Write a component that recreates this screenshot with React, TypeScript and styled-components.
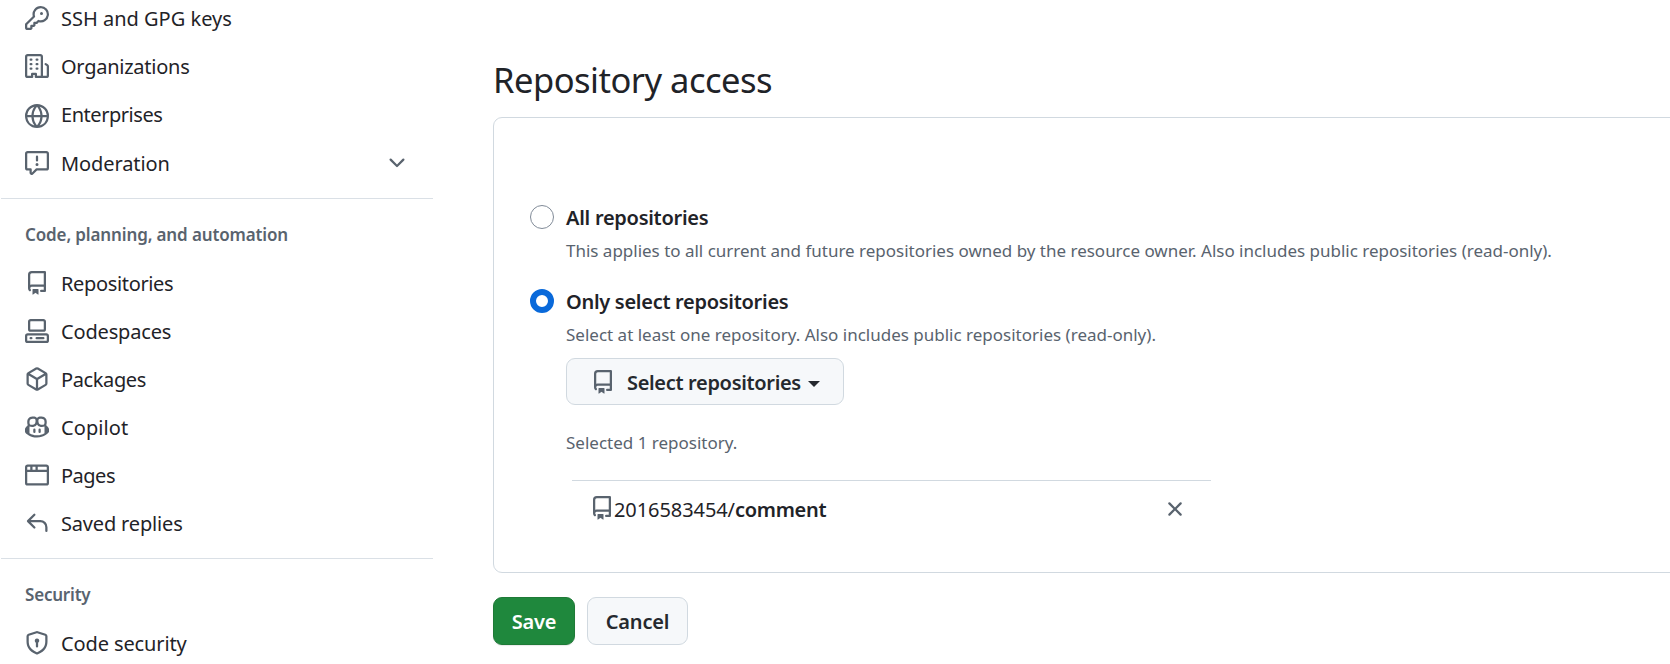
import React from "react";
import styled, { createGlobalStyle } from "styled-components";

const GlobalStyle = createGlobalStyle`
  * { box-sizing: border-box; }
  body {
    margin: 0;
    background: #fff;
    color: #1f2328;
    font-family: "Noto Sans", "Open Sans", sans-serif;
    font-size: 20px;
    line-height: 30px;
    overflow: hidden;
  }
  button { font: inherit; color: inherit; }
`;

const paths = {
  key: "M10.5 0a5.499 5.499 0 1 1-1.288 10.848l-.932.932a.749.749 0 0 1-.53.22H7v.75a.749.749 0 0 1-.22.53l-.5.5a.749.749 0 0 1-.53.22H5v.75a.749.749 0 0 1-.22.53l-.5.5a.749.749 0 0 1-.53.22h-2A1.75 1.75 0 0 1 0 14.25v-2c0-.199.079-.389.22-.53l4.932-4.932A5.5 5.5 0 0 1 10.5 0Zm-4 5.5c-.001.431.069.86.205 1.269a.75.75 0 0 1-.181.768L1.5 12.56v1.69c0 .138.112.25.25.25h1.69l.06-.06v-1.19a.75.75 0 0 1 .75-.75h1.19l.06-.06v-1.19a.75.75 0 0 1 .75-.75h1.19l1.023-1.025a.75.75 0 0 1 .768-.18A4 4 0 1 0 6.5 5.5ZM11 6a1 1 0 1 1 0-2 1 1 0 0 1 0 2Z",
  organization: "M1.75 16A1.75 1.75 0 0 1 0 14.25V1.75C0 .784.784 0 1.75 0h8.5C11.216 0 12 .784 12 1.75v12.5c0 .085-.006.168-.018.25h2.268a.25.25 0 0 0 .25-.25V8.285a.25.25 0 0 0-.111-.208l-1.055-.703a.749.749 0 1 1 .832-1.248l1.055.703c.487.325.779.871.779 1.456v5.965A1.75 1.75 0 0 1 14.25 16h-3.5a.766.766 0 0 1-.197-.026c-.099.017-.2.026-.303.026h-3a.75.75 0 0 1-.75-.75V14h-1v1.25a.75.75 0 0 1-.75.75Zm-.25-1.75c0 .138.112.25.25.25H4v-1.25a.75.75 0 0 1 .75-.75h2.5a.75.75 0 0 1 .75.75v1.25h2.25a.25.25 0 0 0 .25-.25V1.75a.25.25 0 0 0-.25-.25h-8.5a.25.25 0 0 0-.25.25ZM3.75 6h.5a.75.75 0 0 1 0 1.5h-.5a.75.75 0 0 1 0-1.5ZM3 3.75A.75.75 0 0 1 3.75 3h.5a.75.75 0 0 1 0 1.5h-.5A.75.75 0 0 1 3 3.75Zm4 3A.75.75 0 0 1 7.75 6h.5a.75.75 0 0 1 0 1.5h-.5A.75.75 0 0 1 7 6.75ZM7.75 3h.5a.75.75 0 0 1 0 1.5h-.5a.75.75 0 0 1 0-1.5ZM3 9.75A.75.75 0 0 1 3.75 9h.5a.75.75 0 0 1 0 1.5h-.5A.75.75 0 0 1 3 9.75ZM7.75 9h.5a.75.75 0 0 1 0 1.5h-.5a.75.75 0 0 1 0-1.5Z",
  globe: "M8 0a8 8 0 1 1 0 16A8 8 0 0 1 8 0ZM5.78 8.75a9.64 9.64 0 0 0 1.363 4.177c.255.426.542.832.857 1.215.245-.296.551-.705.857-1.215A9.64 9.64 0 0 0 10.22 8.75Zm4.44-1.5a9.64 9.64 0 0 0-1.363-4.177c-.307-.51-.612-.919-.857-1.215a9.927 9.927 0 0 0-.857 1.215A9.64 9.64 0 0 0 5.78 7.25Zm-5.944 1.5H1.543a6.507 6.507 0 0 0 4.666 5.5c-.123-.181-.24-.365-.352-.552-.715-1.192-1.437-2.874-1.581-4.948Zm-2.733-1.5h2.733c.144-2.074.866-3.756 1.58-4.948.12-.197.237-.381.353-.552a6.507 6.507 0 0 0-4.666 5.5Zm10.181 1.5c-.144 2.074-.866 3.756-1.58 4.948-.12.197-.237.381-.353.552a6.507 6.507 0 0 0 4.666-5.5Zm2.733-1.5a6.507 6.507 0 0 0-4.666-5.5c.123.181.24.365.353.552.714 1.192 1.436 2.874 1.58 4.948Z",
  report: "M0 1.75C0 .784.784 0 1.75 0h12.5C15.216 0 16 .784 16 1.75v9.5A1.75 1.75 0 0 1 14.25 13H8.06l-2.573 2.573A1.458 1.458 0 0 1 3 14.543V13H1.75A1.75 1.75 0 0 1 0 11.25Zm1.75-.25a.25.25 0 0 0-.25.25v9.5c0 .138.112.25.25.25h2a.75.75 0 0 1 .75.75v2.19l2.72-2.72a.749.749 0 0 1 .53-.22h6.5a.25.25 0 0 0 .25-.25v-9.5a.25.25 0 0 0-.25-.25Zm7 2.25v2.5a.75.75 0 0 1-1.5 0v-2.5a.75.75 0 0 1 1.5 0ZM9 9a1 1 0 1 1-2 0 1 1 0 0 1 2 0Z",
  chevron: "M12.78 5.22a.749.749 0 0 1 0 1.06l-4.25 4.25a.749.749 0 0 1-1.06 0L3.22 6.28a.749.749 0 1 1 1.06-1.06L8 8.939l3.72-3.719a.749.749 0 0 1 1.06 0Z",
  repo: "M2 2.5A2.5 2.5 0 0 1 4.5 0h8.75a.75.75 0 0 1 .75.75v12.5a.75.75 0 0 1-.75.75h-2.5a.75.75 0 0 1 0-1.5h1.75v-2h-8a1 1 0 0 0-.714 1.7.75.75 0 1 1-1.072 1.05A2.495 2.495 0 0 1 2 11.5Zm10.5-1h-8a1 1 0 0 0-1 1v6.708A2.486 2.486 0 0 1 4.5 9h8ZM5 12.25a.25.25 0 0 1 .25-.25h3.5a.25.25 0 0 1 .25.25v3.25a.25.25 0 0 1-.4.2l-1.45-1.087a.249.249 0 0 0-.3 0L5.4 15.7a.25.25 0 0 1-.4-.2Z",
  codespaces: "M0 11.25c0-.966.784-1.75 1.75-1.75h12.5c.966 0 1.75.784 1.75 1.75v3A1.75 1.75 0 0 1 14.25 16H1.75A1.75 1.75 0 0 1 0 14.25Zm2-9.5C2 .784 2.784 0 3.75 0h8.5C13.216 0 14 .784 14 1.75v5a1.75 1.75 0 0 1-1.75 1.75h-8.5A1.75 1.75 0 0 1 2 6.75Zm1.75-.25a.25.25 0 0 0-.25.25v5c0 .138.112.25.25.25h8.5a.25.25 0 0 0 .25-.25v-5a.25.25 0 0 0-.25-.25Zm-2 9.5a.25.25 0 0 0-.25.25v3c0 .138.112.25.25.25h12.5a.25.25 0 0 0 .25-.25v-3a.25.25 0 0 0-.25-.25ZM7 12.75a.75.75 0 0 1 .75-.75h4.5a.75.75 0 0 1 0 1.5h-4.5a.75.75 0 0 1-.75-.75Zm-4 0a.75.75 0 0 1 .75-.75h.5a.75.75 0 0 1 0 1.5h-.5a.75.75 0 0 1-.75-.75Z",
  package: "m8.878.392 5.25 3.045c.54.314.872.89.872 1.514v6.098a1.75 1.75 0 0 1-.872 1.514l-5.25 3.045a1.75 1.75 0 0 1-1.756 0l-5.25-3.045A1.75 1.75 0 0 1 1 11.049V4.951c0-.624.332-1.201.872-1.514L7.122.392a1.75 1.75 0 0 1 1.756 0ZM7.875 1.69l-4.63 2.685L8 7.133l4.755-2.758-4.63-2.685a.248.248 0 0 0-.25 0ZM2.5 5.677v5.372c0 .09.047.171.125.216l4.625 2.683V8.432Zm6.25 8.271 4.625-2.683a.25.25 0 0 0 .125-.216V5.677L8.75 8.432Z",
  copilot: "M7.998 15.035c-4.562 0-7.873-2.914-7.998-3.749V9.338c.085-.628.677-1.686 1.588-2.065.013-.07.024-.143.036-.218.029-.183.06-.384.126-.612-.201-.508-.254-1.084-.254-1.656 0-.87.128-1.769.693-2.484.579-.733 1.494-1.124 2.724-1.261 1.206-.134 2.262.034 2.944.765.05.053.096.108.139.165.044-.057.094-.112.143-.165.682-.731 1.738-.899 2.944-.765 1.23.137 2.145.528 2.724 1.261.566.715.693 1.614.693 2.484 0 .572-.053 1.148-.254 1.656.066.228.098.429.126.612.012.076.024.148.037.218.924.385 1.522 1.471 1.591 2.095v1.872c0 .766-3.351 3.795-8.002 3.795Zm0-1.485c2.28 0 4.584-1.11 5.002-1.433V7.862l-.023-.116c-.49.21-1.075.291-1.727.291-1.146 0-2.059-.327-2.71-.991A3.222 3.222 0 0 1 8 6.303a3.24 3.24 0 0 1-.544.743c-.65.664-1.563.991-2.71.991-.652 0-1.236-.081-1.727-.291l-.023.116v4.255c.419.323 2.722 1.433 5.002 1.433ZM6.762 2.83c-.193-.206-.637-.413-1.682-.297-1.019.113-1.479.404-1.713.7-.247.312-.369.789-.369 1.554 0 .793.129 1.171.308 1.371.162.181.519.379 1.442.379.853 0 1.339-.235 1.638-.54.315-.322.527-.827.617-1.553.117-.935-.037-1.395-.241-1.614Zm4.155-.297c-1.044-.116-1.488.091-1.681.297-.204.219-.359.679-.242 1.614.091.726.303 1.231.618 1.553.299.305.784.54 1.638.54.922 0 1.28-.198 1.442-.379.179-.2.308-.578.308-1.371 0-.765-.123-1.242-.37-1.554-.233-.296-.693-.587-1.713-.7ZM6.25 9.037a.75.75 0 0 1 .75.75v1.501a.75.75 0 0 1-1.5 0V9.787a.75.75 0 0 1 .75-.75Zm4.25.75v1.501a.75.75 0 0 1-1.5 0V9.787a.75.75 0 0 1 1.5 0Z",
  browser: "M0 2.75C0 1.784.784 1 1.75 1h12.5c.966 0 1.75.784 1.75 1.75v10.5A1.75 1.75 0 0 1 14.25 15H1.75A1.75 1.75 0 0 1 0 13.25ZM14.5 6h-13v7.25c0 .138.112.25.25.25h12.5a.25.25 0 0 0 .25-.25Zm-6-3.5v2h6V2.75a.25.25 0 0 0-.25-.25ZM5 2.5v2h2v-2Zm-3.25 0a.25.25 0 0 0-.25.25V4.5h2v-2Z",
  reply: "M6.78 1.97a.75.75 0 0 1 0 1.06L3.81 6h6.44A4.75 4.75 0 0 1 15 10.75v2.5a.75.75 0 0 1-1.5 0v-2.5a3.25 3.25 0 0 0-3.25-3.25H3.81l2.97 2.97a.749.749 0 0 1-.326 1.275.749.749 0 0 1-.734-.215L1.47 7.28a.75.75 0 0 1 0-1.06l4.25-4.25a.75.75 0 0 1 1.06 0Z",
  shield: "m8.533.133 5.25 1.68A1.75 1.75 0 0 1 15 3.48V7c0 1.566-.32 3.182-1.303 4.682-.983 1.498-2.585 2.813-5.032 3.855a1.697 1.697 0 0 1-1.33 0c-2.447-1.042-4.049-2.357-5.032-3.855C1.32 10.182 1 8.566 1 7V3.48a1.755 1.755 0 0 1 1.217-1.667l5.25-1.68a1.748 1.748 0 0 1 1.066 0Zm-.61 1.429.001.001-5.25 1.68a.251.251 0 0 0-.174.237V7c0 1.36.275 2.666 1.057 3.859.784 1.194 2.121 2.342 4.366 3.298a.196.196 0 0 0 .154 0c2.245-.957 3.582-2.103 4.366-3.297C13.225 9.666 13.5 8.358 13.5 7V3.48a.25.25 0 0 0-.174-.238l-5.25-1.68a.25.25 0 0 0-.153 0ZM9.5 6.5c0 .536-.286 1.032-.75 1.3v2.45a.75.75 0 0 1-1.5 0V7.8A1.5 1.5 0 1 1 9.5 6.5Z",
  x: "M3.72 3.72a.75.75 0 0 1 1.06 0L8 6.94l3.22-3.22a.749.749 0 0 1 1.275.326.749.749 0 0 1-.215.734L9.06 8l3.22 3.22a.749.749 0 0 1-.326 1.275.749.749 0 0 1-.734-.215L8 9.06l-3.22 3.22a.751.751 0 0 1-1.042-.018.751.751 0 0 1-.018-1.042L6.94 8 3.72 4.78a.75.75 0 0 1 0-1.06Z",
};

type IconName = keyof typeof paths;

const Svg = styled.svg`
  display: block;
  flex: none;
  width: 24px;
  height: 24px;
  fill: #59636e;
`;

const Icon = ({ name }: { name: IconName }) => (
  <Svg viewBox="0 0 16 16" aria-hidden="true">
    <path d={paths[name]} />
  </Svg>
);

const Page = styled.div`
  display: flex;
  height: 664px;
  overflow: hidden;
`;

const Sidebar = styled.nav`
  flex: none;
  width: 433px;
  padding-left: 1px;
  margin-top: -6px;
`;

const NavRow = styled.a<{ $tall?: boolean; $drop?: number }>`
  display: flex;
  align-items: center;
  height: ${(p) => (p.$tall ? 49 : 48)}px;
  padding: 0 24px;
  > svg:first-child { margin-top: ${(p) => (p.$drop ?? 0) * 2}px; }
`;

const Label = styled.span<{ $track?: number }>`
  white-space: nowrap;
  letter-spacing: ${(p) => p.$track ?? 0}px;
`;

const NavLabel = styled(Label)`
  flex: 1;
  margin: 2px 0 0 12px;
`;

const Divider = styled.hr`
  margin: 11px 0 0;
  border: 0;
  height: 1px;
  background: #dae0e6;
`;

const GroupTitle = styled.h3<{ $track?: number }>`
  margin: 22px 0 11px 24px;
  color: #59636e;
  font-size: 17px;
  font-weight: 600;
  line-height: 27px;
  letter-spacing: ${(p) => p.$track ?? 0}px;
`;

const Main = styled.main`
  flex: 1;
  min-width: 0;
  padding: 53px 0 0 60px;
`;

const Title = styled.h2`
  margin: 0;
  height: 64px;
  font-size: 34.5px;
  font-weight: 400;
  line-height: 53px;
  letter-spacing: -0.5px;
`;

const Card = styled.section`
  height: 456px;
  margin-right: -20px;
  padding: 83px 0 0 36px;
  border: 1px solid #d1d9e0;
  border-radius: 9px;
`;

const Option = styled.div`
  display: flex;
  min-height: 84px;
`;

const Radio = styled.span<{ $checked?: boolean }>`
  flex: none;
  width: 24px;
  height: 24px;
  margin: 4px 12px 0 0;
  border-radius: 50%;
  border: ${(p) => (p.$checked ? "6px solid #0969da" : "1px solid #818b98")};
`;

const OptionBody = styled.div`
  display: flex;
  flex-direction: column;
  align-items: flex-start;
`;

const Strong = styled(Label)`
  font-weight: 600;
`;

const OptionTitle = styled(Strong)`
  margin-top: 2px;
`;

const Note = styled(Label)`
  color: #59636e;
  font-size: 17px;
  line-height: 27px;
`;

const OptionNote = styled(Note)`
  margin-top: 4px;
`;

const Button = styled.button<{ $primary?: boolean; $width: number }>`
  display: flex;
  flex: none;
  align-items: center;
  justify-content: center;
  width: ${(p) => p.$width}px;
  height: 48px;
  padding: 2px 0 0;
  border: 1px solid ${(p) => (p.$primary ? "#1f7a37" : "#d1d9e0")};
  border-radius: 9px;
  background: ${(p) => (p.$primary ? "#1f883d" : "#f6f8fa")};
  color: ${(p) => (p.$primary ? "#fff" : "#25292e")};
  box-shadow: ${(p) => (p.$primary ? "0 1px 1px rgba(31, 35, 40, 0.1)" : "none")};
  font-weight: 600;
`;

const SelectButton = styled(Button)`
  height: 47px;
  padding: 0 24px;
  justify-content: flex-start;
  margin-top: 10px;
`;

const SelectLabel = styled(Strong)`
  width: 174px;
  margin: 2px 7px 0 12px;
  text-align: left;
`;

const Caret = styled.i`
  border: 6px solid transparent;
  border-top-color: #25292e;
  border-bottom: 0;
  margin-top: 4px;
`;

const Selection = styled.div`
  display: flex;
  flex-direction: column;
  align-items: flex-start;
  margin: 24px 0 0 36px;
`;

const SelectedList = styled.ul`
  list-style: none;
  width: 639px;
  margin: 24px 0 0 6px;
  padding: 0;
`;

const SelectedRow = styled.li`
  display: flex;
  align-items: flex-start;
  padding: 13px 24px 0 18px;
  border-top: 1px solid #d1d9e0;
  > svg { margin-top: 3px; }
`;

const RepoName = styled.span`
  flex: 1;
  padding-top: 1px;
`;

const RepoIcon = styled.span`
  margin-top: 2px;
`;

const Actions = styled.div`
  display: flex;
  gap: 12px;
  margin-top: 24px;
`;

type Item = { icon: IconName; text: string; track?: number; drop?: number; expandable?: boolean };

const account: Item[] = [
  { icon: "key", text: "SSH and GPG keys" },
  { icon: "organization", text: "Organizations", track: -0.25 },
  { icon: "globe", text: "Enterprises", track: -0.46, drop: 2 },
  { icon: "report", text: "Moderation", track: -0.1, expandable: true },
];

const automation: Item[] = [
  { icon: "repo", text: "Repositories", track: -0.35 },
  { icon: "codespaces", text: "Codespaces", track: -0.16 },
  { icon: "package", text: "Packages", track: -0.38 },
  { icon: "copilot", text: "Copilot", track: 0.07 },
  { icon: "browser", text: "Pages", track: -0.5 },
  { icon: "reply", text: "Saved replies", track: -0.17 },
];

const security: Item[] = [{ icon: "shield", text: "Code security", track: -0.12 }];

const NavGroup = ({ items }: { items: Item[] }) => (
  <>
    {items.map((i) => (
      <NavRow key={i.text} $tall={i.expandable} $drop={i.drop}>
        <Icon name={i.icon} />
        <NavLabel $track={i.track}>{i.text}</NavLabel>
        {i.expandable && <Icon name="chevron" />}
      </NavRow>
    ))}
  </>
);

export default function App() {
  return (
    <>
      <GlobalStyle />
      <Page>
        <Sidebar>
          <NavGroup items={account} />
          <Divider />
          <GroupTitle $track={-0.13}>Code, planning, and automation</GroupTitle>
          <NavGroup items={automation} />
          <Divider />
          <GroupTitle $track={-0.2}>Security</GroupTitle>
          <NavGroup items={security} />
        </Sidebar>
        <Main>
          <Title>Repository access</Title>
          <Card>
            <Option>
              <Radio />
              <OptionBody>
                <OptionTitle $track={-0.27}>All repositories</OptionTitle>
                <OptionNote $track={-0.01}>
                  This applies to all current and future repositories owned by the resource owner. Also includes public repositories (read-only).
                </OptionNote>
              </OptionBody>
            </Option>
            <Option>
              <Radio $checked />
              <OptionBody>
                <OptionTitle $track={-0.29}>Only select repositories</OptionTitle>
                <OptionNote>Select at least one repository. Also includes public repositories (read-only).</OptionNote>
                <SelectButton $width={278}>
                  <Icon name="repo" />
                  <SelectLabel $track={-0.33}>Select repositories</SelectLabel>
                  <Caret />
                </SelectButton>
              </OptionBody>
            </Option>
            <Selection>
              <Note>Selected 1 repository.</Note>
              <SelectedList>
                <SelectedRow>
                  <RepoIcon>
                    <Icon name="repo" />
                  </RepoIcon>
                  <RepoName>
                    <Label $track={-0.08}>2016583454/</Label>
                    <Strong $track={-0.3}>comment</Strong>
                  </RepoName>
                  <Icon name="x" />
                </SelectedRow>
              </SelectedList>
            </Selection>
          </Card>
          <Actions>
            <Button $primary $width={82}>
              <Strong $track={-0.25}>Save</Strong>
            </Button>
            <Button $width={101}>
              <Strong $track={-0.2}>Cancel</Strong>
            </Button>
          </Actions>
        </Main>
      </Page>
    </>
  );
}
